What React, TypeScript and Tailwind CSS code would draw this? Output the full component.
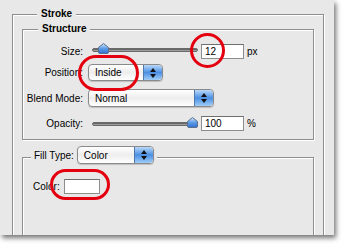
import React from "react";

const PANEL = "bg-[#e8e8e8]";
const ETCH = "border-[#8e8e8e] shadow-[inset_1px_1px_0_#fff,1px_1px_0_#fff]";

function Stepper() {
  return (
    <div className="flex h-full w-[19px] flex-col items-center justify-center gap-[2px] rounded-r-[4px] border-l border-[#4f78ad] bg-gradient-to-b from-[#b9d8f8] via-[#4a8fe3] to-[#9fcdf6]">
      <svg width="6" height="4" viewBox="0 0 6 4">
        <path d="M3 0 L6 4 L0 4 Z" fill="#111" />
      </svg>
      <svg width="6" height="4" viewBox="0 0 6 4">
        <path d="M0 0 L6 0 L3 4 Z" fill="#111" />
      </svg>
    </div>
  );
}

function Select({ value, className }: { value: string; className: string }) {
  return (
    <div
      className={`flex overflow-hidden rounded-[4px] border border-[#8a8a8a] bg-gradient-to-b from-white via-[#ededed] to-white shadow-[0_1px_1px_rgba(0,0,0,0.18)] ${className}`}
    >
      <span className="flex flex-1 items-center pl-[6px] text-[10px] text-black">{value}</span>
      <Stepper />
    </div>
  );
}

function Thumb({ className }: { className: string }) {
  return (
    <svg className={`absolute ${className}`} width="11" height="11" viewBox="0 0 11 11">
      <defs>
        <linearGradient id="thumbFill" x1="0" y1="0" x2="0" y2="1">
          <stop offset="0" stopColor="#d4e8fb" />
          <stop offset="0.5" stopColor="#5d9ce6" />
          <stop offset="1" stopColor="#2f6fcf" />
        </linearGradient>
      </defs>
      <path
        d="M5.5 0.5 L10.5 4.5 L10.5 9 Q10.5 10.5 9 10.5 L2 10.5 Q0.5 10.5 0.5 9 L0.5 4.5 Z"
        fill="url(#thumbFill)"
        stroke="#5b6f8c"
        strokeWidth="1"
      />
    </svg>
  );
}

// track sits 4px above the thumb's bottom so the thumb covers it
function Slider({ thumb, offset }: { thumb: string; offset: string }) {
  return (
    <div className={`relative ml-[4px] h-full w-[106px] ${offset}`}>
      <div className="absolute left-0 right-0 top-[5px] h-[4px] rounded-full border border-[#6a6a6a] bg-gradient-to-b from-[#4e4e4e] to-[#b8b8b8]" />
      <Thumb className={`top-0 ${thumb}`} />
    </div>
  );
}

function Field({ value }: { value: string }) {
  return (
    <div className="ml-[3px] flex h-[15px] w-[43px] items-center border border-[#8d8d8d] border-t-[#6e6e6e] bg-white pl-[3px] text-[10px] text-black">
      {value}
    </div>
  );
}

function Label({ text }: { text: string }) {
  return <span className="w-[60px] shrink-0 text-right text-[10px] text-black">{text}</span>;
}

function Ring({ className }: { className: string }) {
  return <div className={`absolute rounded-full border-[3px] border-[#e4000f] ${className}`} />;
}

export default function App() {
  return (
    <div className="h-[244px] w-[342px] bg-white font-['Liberation_Sans',Arial,sans-serif]">
      <div className={`relative h-[235px] w-[334px] overflow-hidden ${PANEL} shadow-[2px_3px_5px_rgba(0,0,0,0.55)]`}>
        <div className={`ml-[12px] mt-[14px] flex h-[240px] w-[312px] flex-col border-l border-r border-t px-[9px] ${ETCH}`}>
          <div className={`-mt-[7px] ml-[15px] h-[12px] w-fit px-[4px] text-[10px] font-bold leading-[12px] text-black ${PANEL}`}>
            Stroke
          </div>

          <div className={`mt-[9px] flex flex-col border pb-[7px] ${ETCH}`}>
            <div className={`-mt-[7px] ml-[15px] h-[12px] w-fit px-[4px] text-[10px] font-bold leading-[12px] text-black ${PANEL}`}>
              Structure
            </div>

            <div className="mt-[8px] flex h-[17px] items-center">
              <Label text="Size:" />
              <div className="ml-[5px] flex h-full items-center">
                <Slider thumb="left-[6px]" offset="mt-[0px]" />
                <Field value="12" />
                <span className="ml-[3px] text-[10px] text-black">px</span>
              </div>
            </div>

            <div className="mt-[4px] flex h-[17px] items-center">
              <Label text="Position:" />
              <Select value="Inside" className="ml-[5px] h-[17px] w-[75px]" />
            </div>

            <div className="mt-[8px] flex h-[18px] items-center">
              <Label text="Blend Mode:" />
              <Select value="Normal" className="ml-[5px] h-[18px] w-[126px]" />
            </div>

            <div className="mt-[8px] flex h-[17px] items-center">
              <Label text="Opacity:" />
              <div className="ml-[5px] flex h-full items-center">
                <Slider thumb="left-[95px]" offset="mt-[4px]" />
                <Field value="100" />
                <span className="ml-[3px] text-[10px] text-black">%</span>
              </div>
            </div>
          </div>

          <div className={`mt-[17px] flex flex-1 flex-col border-l border-r border-t ${ETCH}`}>
            <div className={`-mt-[12px] ml-[8px] flex h-[18px] w-fit items-center gap-[3px] px-[3px] ${PANEL}`}>
              <span className="text-[10px] text-black">Fill Type:</span>
              <Select value="Color" className="h-[18px] w-[77px]" />
            </div>
            <div className="ml-[10px] mt-[15px] flex h-[15px] items-center gap-[4px]">
              <span className="text-[10px] text-black">Color:</span>
              <div className="h-[15px] w-[36px] border border-[#8d8d8d] border-t-[#6e6e6e] bg-white" />
            </div>
          </div>
        </div>

        <Ring className="left-[190px] top-[33px] h-[35px] w-[35px]" />
        <Ring className="left-[78px] top-[55px] h-[36px] w-[61px]" />
        <Ring className="left-[50px] top-[169px] h-[31px] w-[60px]" />
      </div>
    </div>
  );
}
